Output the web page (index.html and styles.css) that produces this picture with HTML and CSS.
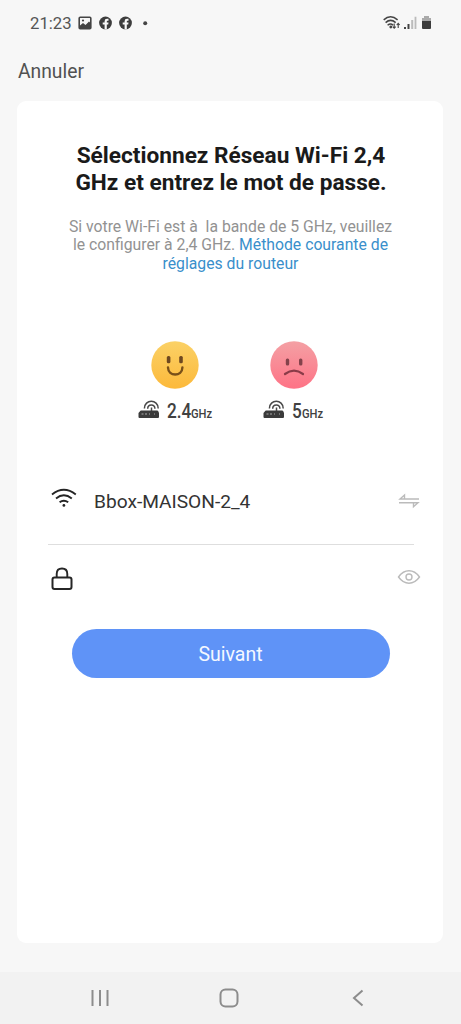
FILE: index.html
```html
<!DOCTYPE html>
<html lang="fr">
<head>
<meta charset="utf-8">
<title>Réseau Wi-Fi</title>
<link rel="stylesheet" href="styles.css">
</head>
<body>
<div class="screen">
  <header class="status">
    <span class="clock">21:23</span>
    <svg class="notifications" width="73" height="16" viewBox="0 0 73 16">
      <rect x="1.2" y="2.2" width="11.6" height="11.6" rx="1" fill="none" stroke="#444" stroke-width="1.6"/>
      <path d="M2 12V10.5L5 8L7.5 10L11 6.5L13 8.5V13H2Z" fill="#444"/>
      <circle cx="5" cy="5.5" r="1.1" fill="#444"/>
      <circle cx="27.5" cy="8" r="6.4" fill="#3d3d3d"/>
      <path d="M26.6 14.5V9.6H24.7V7.5H26.6V6.2Q26.6 3.8 29 3.8H30.5V5.7H29.5Q28.8 5.7 28.8 6.5V7.5H30.5L30.2 9.6H28.8V14.5Z" fill="#f7f7f7"/>
      <circle cx="47.5" cy="8" r="6.4" fill="#3d3d3d"/>
      <path d="M46.6 14.5V9.6H44.7V7.5H46.6V6.2Q46.6 3.8 49 3.8H50.5V5.7H49.5Q48.8 5.7 48.8 6.5V7.5H50.5L50.2 9.6H48.8V14.5Z" fill="#f7f7f7"/>
      <circle cx="67.2" cy="8.2" r="2" fill="#444"/>
    </svg>
    <svg class="signals" width="49" height="16" viewBox="0 0 49 16">
      <g fill="none" stroke="#444" stroke-width="1.5">
        <path d="M.7 4.9Q7.5-1.3 14.6 4.9M2.6 7.6Q7.6 3.2 12.7 7.6M4.6 10.2Q7.5 7.7 10.2 10.2"/>
        <path d="M11.2 8.5V13M9.7 11.7L11.2 13.3L12.7 11.7M15.2 13V8.5M13.7 10L15.2 8.3L16.7 10" stroke-width="1.1"/>
      </g>
      <circle cx="7.8" cy="12" r="1.4" fill="#444"/>
      <path d="M21 12H23V14H21ZM24.5 9H26.5V14H24.5Z" fill="#444"/>
      <path d="M28.2 5H30.2V14H28.2ZM31.6 1.7H33.4V14H31.6Z" fill="#bbb"/>
      <path d="M41 1H46V3H48V6H39V3H41Z" fill="#aaa"/>
      <path d="M39 6H48V13Q48 14 47 14H40Q39 14 39 13Z" fill="#3c3c3c"/>
    </svg>
  </header>
  <nav class="topbar"><span class="cancel">Annuler</span></nav>

  <main class="card">
    <h1 class="title">Sélectionnez Réseau Wi-Fi 2,4<br>GHz et entrez le mot de passe.</h1>
    <p class="hint">Si votre Wi-Fi est à&nbsp; la bande de 5 GHz, veuillez<br>le configurer à 2,4 GHz. <a class="link">Méthode courante de<br>réglages du routeur</a></p>

    <section class="bands">
      <div class="band">
        <svg class="face" width="48" height="48" viewBox="0 0 48 48">
          <defs><linearGradient id="happy" x2="0" y2="1"><stop stop-color="#fbd166"/><stop offset="1" stop-color="#fcb93b"/></linearGradient></defs>
          <circle cx="24" cy="24" r="23.7" fill="url(#happy)"/>
          <rect x="15.8" y="15" width="3.6" height="7.2" rx="1.5" fill="#6e4820"/>
          <rect x="28.2" y="15" width="3.6" height="7.2" rx="1.5" fill="#6e4820"/>
          <path d="M17 26.5C17.2 35.8 31.2 35.8 31.4 26.5" fill="none" stroke="#795019" stroke-width="2.4" stroke-linecap="round"/>
        </svg>
        <div class="frequency">
          <svg class="router" width="22" height="19" viewBox="0 0 22 19">
            <path d="M3.2 11.5H19Q20 11.5 20.4 12.5L21 14V18Q21 19 20 19H1.5Q.5 19 .5 18V14L1.8 12.5Q2.2 11.5 3.2 11.5Z" fill="#3b3b3b"/>
            <path d="M13.5 12V8.5M6.4 9.4C6.4 0 20.2 0 20.2 9.4M9.7 9.7C9.7 4.6 16.9 4.6 16.9 9.7" fill="none" stroke="#484848" stroke-width="1.5"/>
            <path d="M3.5 15H5.5M7 15H9M11 15H12M16 15H17" stroke="#aaa"/>
          </svg>
          <span class="amount">2.4</span><span class="unit">GHz</span>
        </div>
      </div>
      <div class="band band-high">
        <svg class="face" width="48" height="48" viewBox="0 0 48 48">
          <defs><linearGradient id="sad" x2="0" y2="1"><stop stop-color="#f4a0a4"/><stop offset="1" stop-color="#fe7386"/></linearGradient></defs>
          <circle cx="24" cy="24" r="23.7" fill="url(#sad)"/>
          <rect x="15.8" y="17.4" width="3.4" height="7" rx="1.5" fill="#84424b"/>
          <rect x="29" y="17.4" width="3.4" height="7" rx="1.5" fill="#84424b"/>
          <path d="M15 33Q24 26.4 33 33" fill="none" stroke="#8a3b48" stroke-width="2.2" stroke-linecap="round"/>
        </svg>
        <div class="frequency">
          <svg class="router" width="22" height="19" viewBox="0 0 22 19">
            <path d="M3.2 11.5H19Q20 11.5 20.4 12.5L21 14V18Q21 19 20 19H1.5Q.5 19 .5 18V14L1.8 12.5Q2.2 11.5 3.2 11.5Z" fill="#3b3b3b"/>
            <path d="M13.5 12V8.5M6.4 9.4C6.4 0 20.2 0 20.2 9.4M9.7 9.7C9.7 4.6 16.9 4.6 16.9 9.7" fill="none" stroke="#484848" stroke-width="1.5"/>
            <path d="M3.5 15H5.5M7 15H9M11 15H12M16 15H17" stroke="#aaa"/>
          </svg>
          <span class="amount amount-short">5</span><span class="unit">GHz</span>
        </div>
      </div>
    </section>

    <section class="form">
      <div class="field network">
        <svg class="wifi" width="28" height="22" viewBox="0 0 28 22">
          <path d="M2 6.4Q13.8-2.8 25.8 6.4M6 10.5Q13.8 4.2 21.8 10.5M9.6 14.3Q13.8 11 18.2 14.3" fill="none" stroke="#242424" stroke-width="1.9"/>
          <circle cx="13.9" cy="17.4" r="1.4" fill="#242424"/>
        </svg>
        <span class="ssid">Bbox-MAISON-2_4</span>
        <svg class="swap" width="22" height="16" viewBox="0 0 22 16">
          <path d="M21 6H2L6.5 2V6M1 9.7H20L15.5 13.7V9.7" fill="none" stroke="#bbb" stroke-width="1.4"/>
        </svg>
      </div>
      <div class="field password">
        <svg class="lock" width="22" height="24" viewBox="0 0 22 24">
          <rect x="1.5" y="10.5" width="19" height="11.5" rx="2" fill="none" stroke="#262626" stroke-width="2"/>
          <path d="M5.7 10V7Q5.7 1.5 11 1.5T16.3 7V10" fill="none" stroke="#262626" stroke-width="1.9"/>
        </svg>
        <svg class="eye" width="24" height="16" viewBox="0 0 24 16">
          <path d="M1.5 8Q6 1.8 12 1.8T22.5 8Q18 14.2 12 14.2T1.5 8Z" fill="none" stroke="#bbb" stroke-width="1.4"/>
          <circle cx="12" cy="8" r="3" fill="none" stroke="#bbb" stroke-width="1.4"/>
        </svg>
      </div>
    </section>
    <button class="next">Suivant</button>
  </main>

  <footer class="system-nav">
    <svg width="18" height="18" viewBox="0 0 18 18"><path d="M1.5 1V17M9 1V17M16.5 1V17" stroke="#8c8c8c" stroke-width="2"/></svg>
    <svg width="20" height="20" viewBox="0 0 20 20"><rect x="1.5" y="1.5" width="17" height="17" rx="5" fill="none" stroke="#8c8c8c" stroke-width="2"/></svg>
    <svg width="12" height="18" viewBox="0 0 12 18"><path d="M10.5 1.5L2 9L10.5 16.5" fill="none" stroke="#8c8c8c" stroke-width="2"/></svg>
  </footer>
</div>
</body>
</html>
```

FILE: styles.css
```css
* { box-sizing: border-box; }
body { margin: 0; background: #f7f7f7; font-family: Roboto, sans-serif; }
svg { display: block; flex: none; }
.screen { width: 461px; height: 1024px; display: flex; flex-direction: column; overflow: hidden; }
.status { height: 46px; padding: 0 29px 0 30px; display: flex; align-items: center; color: #555; }
.clock { width: 48px; font-size: 16.7px; line-height: 20px; padding-top: 2px; }
.signals { margin-left: auto; }
.topbar { height: 55px; padding: 14px 18px 0; }
.cancel { display: block; font-size: 19.3px; line-height: 23px; color: #515151; }
.card { width: 426px; height: 842px; margin: 0 0 29px 17px; padding: 42px 30px 0; border-radius: 9px; background: #fff; flex: none; }
.title { margin: 0; padding-left: 2px; text-align: center; font-size: 22.65px; line-height: 26.5px; font-weight: 700; color: #1a1a1a; white-space: nowrap; }
.hint { margin: 22px 0 0; padding-left: 1px; text-align: center; font-size: 15.75px; line-height: 18.3px; color: #929292; white-space: nowrap; }
.link { color: #398fcb; }
.bands { display: flex; gap: 50px; padding: 68px 0 0 91px; }
.band { width: 75px; }
.band .face { margin-left: 13px; }
.band-high { width: 62px; }
.band-high .face { margin-left: 7px; }
.frequency { display: flex; align-items: baseline; height: 24px; margin-top: 10px; color: #414141; line-height: 24px; }
.router { margin-right: 7px; }
.amount { width: 24px; font-size: 20px; font-weight: 500; transform: scaleX(.86); transform-origin: left; }
.amount-short { width: 10px; }
.unit { font-size: 12px; font-weight: 500; transform: scaleX(.93); transform-origin: left; }
.form { margin-top: 42px; }
.field { display: flex; align-items: center; }
.network { height: 79px; margin: 0 -7px 0 3px; padding-bottom: 7px; }
.wifi { margin-top: -4px; }
.ssid { margin: 2px 0 0 16px; font-size: 19.15px; color: #333; }
.swap { margin-left: auto; }
.eye { margin: -4px 0 0 auto; }
.password { height: 69px; margin: 0 -8px 0 1px; padding: 1px 0 0 3px; position: relative; }
.password::before { content: ""; position: absolute; left: 0; right: 7px; top: 0; height: 1px; background: #dedede; }
.next { display: block; width: 318px; height: 49px; margin: 16px 0 0 24.5px; padding: 2px 0 0; border: 0; border-radius: 25px; background: #5f93f7; color: #f4f8ff; font-family: inherit; font-size: 19.5px; }
.system-nav { height: 52px; padding: 0 97px 0 91px; display: flex; justify-content: space-between; align-items: center; background: #f2f2f2; flex: none; }
.system-nav svg:nth-child(2) { margin-right: 4px; }
```
